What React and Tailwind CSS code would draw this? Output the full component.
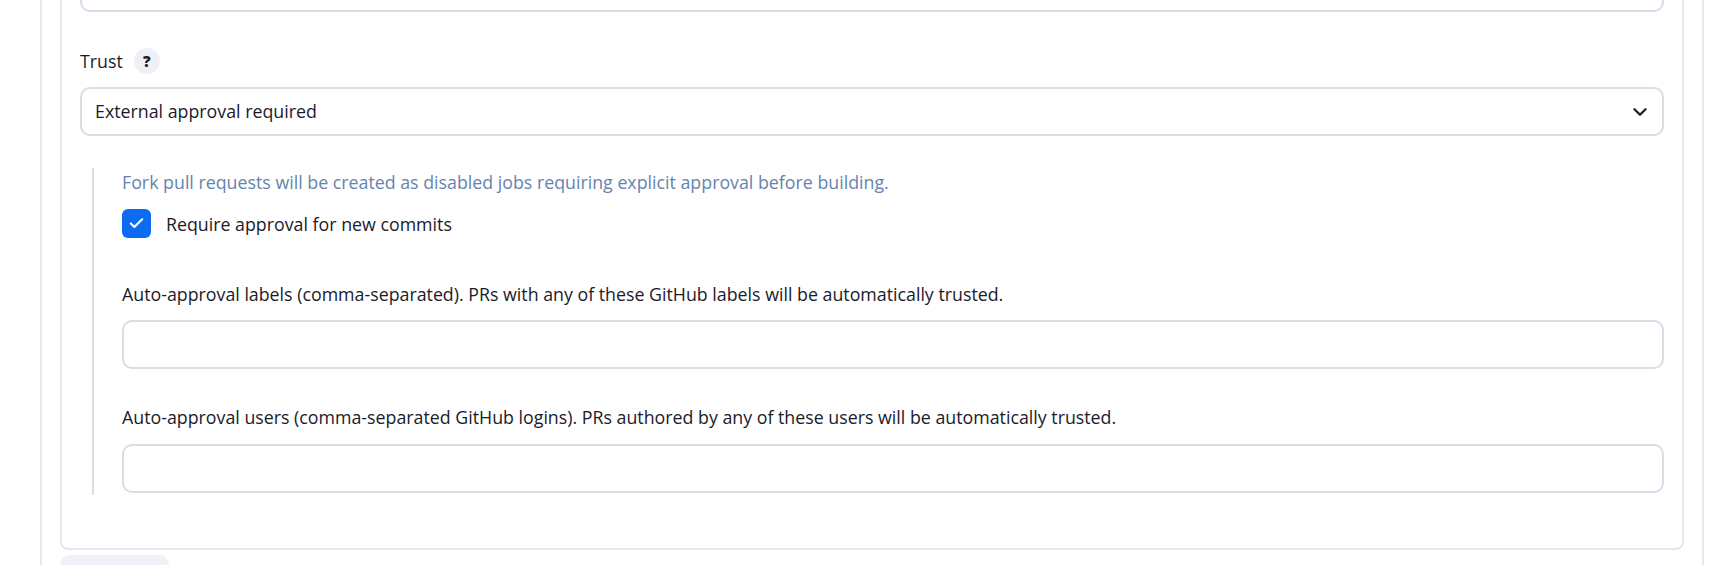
import React, { useState } from 'react';
import { ChevronDown, Check } from 'lucide-react';

export default function App() {
  const [trust, setTrust] = useState('external');
  const [requireNew, setRequireNew] = useState(true);
  const [labels, setLabels] = useState('');
  const [users, setUsers] = useState('');

  return (
    <div className="h-[565px] overflow-hidden bg-white text-[#1b1b2a] font-['Open_Sans',sans-serif] text-[17.8px]">
      <div className="flow-root ml-[40px] mr-[9px] h-full border-x-2 border-[#e4e7ef] px-[18px]">
        {/* Card */}
        <div className="-mt-[56px] rounded-[8px] border-2 border-[#e4e7ef] px-[18px] pt-[18px] pb-[53px]">
          <div className="h-[48px] rounded-[10px] border-2 border-[#d9dde8]" />

          {/* Trust */}
          <div className="mt-[36px] flex h-[26px] items-center">
            <span className="leading-6">Trust</span>
            <span className="ml-[11px] flex h-[26px] w-[26px] items-center justify-center rounded-full bg-[#eef0f5] text-[15px] font-extrabold text-[#1b1b2a]">
              ?
            </span>
          </div>

          <div className="relative mt-[13px]">
            <select
              value={trust}
              onChange={(e) => setTrust(e.target.value)}
              className="h-[49px] w-full appearance-none rounded-[10px] border-2 border-[#d9dde8] bg-white pl-[13px] pr-10 text-[17.8px] text-[#1b1b2a] focus:outline-none"
            >
              <option value="external">External approval required</option>
              <option value="nobody">Nobody</option>
              <option value="collaborators">Collaborators</option>
              <option value="everyone">Everyone</option>
            </select>
            <ChevronDown
              size={22}
              strokeWidth={2.5}
              className="pointer-events-none absolute right-[13px] top-1/2 -translate-y-1/2 text-[#1b1b2a]"
            />
          </div>

          {/* Nested options */}
          <div className="mt-[32px] ml-[12px] border-l-2 border-[#d9dde8] pl-[28px] pt-[2px] pb-[2px]">
            <p className="leading-6 text-[#6584ad]">
              Fork pull requests will be created as disabled jobs requiring explicit approval before building.
            </p>

            <label className="mt-[15px] flex cursor-pointer items-center">
              <button
                type="button"
                onClick={() => setRequireNew(!requireNew)}
                className={
                  requireNew
                    ? 'flex h-[29px] w-[29px] items-center justify-center rounded-[6px] bg-[#0b6bf3]'
                    : 'flex h-[29px] w-[29px] items-center justify-center rounded-[6px] border-2 border-[#d9dde8] bg-white'
                }
              >
                {requireNew && <Check size={17} strokeWidth={3} className="text-white" />}
              </button>
              <span className="ml-[15px] leading-6">Require approval for new commits</span>
            </label>

            <div className="mt-[44px] leading-6">
              Auto-approval labels (comma-separated). PRs with any of these GitHub labels will be automatically trusted.
            </div>
            <input
              type="text"
              value={labels}
              onChange={(e) => setLabels(e.target.value)}
              className="mt-[14px] block h-[49px] w-full rounded-[10px] border-2 border-[#d9dde8] px-[13px] focus:outline-none"
            />

            <div className="mt-[36px] leading-6">
              Auto-approval users (comma-separated GitHub logins). PRs authored by any of these users will be automatically trusted.
            </div>
            <input
              type="text"
              value={users}
              onChange={(e) => setUsers(e.target.value)}
              className="mt-[15px] block h-[49px] w-full rounded-[10px] border-2 border-[#d9dde8] px-[13px] focus:outline-none"
            />
          </div>
        </div>

        <div className="mt-[5px] h-[40px] w-[109px] rounded-[10px] bg-[#eff2f6]" />
      </div>
    </div>
  );
}
